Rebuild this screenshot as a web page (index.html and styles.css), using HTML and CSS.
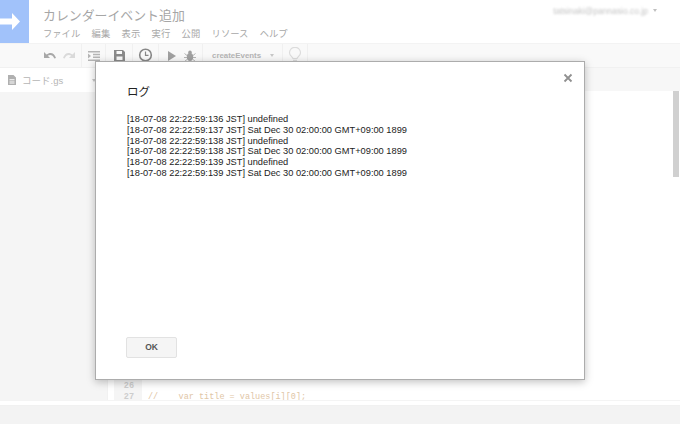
FILE: index.html
```html
<!DOCTYPE html>
<html lang="ja">
<head>
<meta charset="utf-8">
<title>カレンダーイベント追加</title>
<link rel="stylesheet" href="styles.css">
</head>
<body>
<div class="app">
  <header class="header">
    <div class="logo">
      <svg width="29" height="43" viewBox="0 0 29 43"><path d="M0 18.500H12V13L20 21.500L12 30V24.500H0Z" fill="#fff"/></svg>
    </div>
    <div class="titles">
      <div class="doc-title">カレンダーイベント追加</div>
      <nav class="menu">
        <span>ファイル</span><span>編集</span><span>表示</span><span>実行</span><span>公開</span><span>リソース</span><span>ヘルプ</span>
      </nav>
    </div>
    <div class="account">
      <span class="email">tatsinaki@pannasio.co.jp</span>
      <span class="caret"></span>
    </div>
  </header>
  <div class="toolbar">
    <div class="tool-group undo">
      <svg width="14" height="10" viewBox="0 0 14 10"><path d="M1 1V7H7L4.800 4.800C7 3.200 10 4 11.300 7.500L13 7C11.500 1.800 7.200 0.500 3.500 3.500Z" fill="#a8a8a8"/></svg>
      <svg width="14" height="10" viewBox="0 0 14 10"><path d="M13 1V7H7L9.200 4.800C7 3.200 4 4 2.700 7.500L1 7C2.500 1.800 6.800 0.500 10.500 3.500Z" fill="#dadada"/></svg>
    </div>
    <div class="tool-group indent">
      <svg width="12" height="10" viewBox="0 0 12 10"><path d="M0 0H12V1.500H0ZM5 2.800H12V4.200H5ZM5 5.600H12V7H5ZM0 8.500H12V10H0ZM0 2.500L3 5L0 7.500Z" fill="#b5b5b5"/></svg>
    </div>
    <div class="tool-group save">
      <svg width="11" height="11" viewBox="0 0 11 11"><path d="M0 0H9L11 2V11H0ZM2.500 1V4H8V1ZM2.500 6.500V10H8.500V6.500Z" fill="#8a8a8a"/></svg>
    </div>
    <div class="tool-group clock">
      <svg width="15" height="16" viewBox="0 0 15 16"><circle cx="7.500" cy="7" r="5.800" fill="none" stroke="#888" stroke-width="1.600"/><path d="M7.500 3.500V7.300H10.500" fill="none" stroke="#888" stroke-width="1.200"/><path d="M4 13.500V15.500H11V13.500" fill="none" stroke="#aaa"/></svg>
    </div>
    <div class="tool-group run">
      <svg width="8" height="10" viewBox="0 0 8 10"><path d="M0 0L8 5L0 10Z" fill="#a0a0a0"/></svg>
      <svg width="12" height="12" viewBox="0 0 12 12"><ellipse cx="6" cy="7" rx="3.200" ry="4" fill="#a0a0a0"/><circle cx="6" cy="2.400" r="1.800" fill="#a0a0a0"/><path d="M0.500 3.500L3 5.500M11.500 3.500L9 5.500M0 7.500H3M12 7.500H9M0.500 11.500L3 9.500M11.500 11.500L9 9.500" stroke="#b5b5b5" fill="none"/></svg>
    </div>
    <div class="tool-group func">
      <span class="func-name">createEvents</span>
      <span class="caret small"></span>
    </div>
    <div class="tool-group bulb">
      <svg width="14" height="18" viewBox="0 0 14 18"><path d="M5 11.500C4.500 9.800 1.500 8.800 1.500 5.800A5.500 5.500 0 0 1 12.500 5.800C12.500 8.800 9.500 9.800 9 11.500ZM5 13.300H9" fill="none" stroke="#dcdcdc" stroke-width="1.200"/></svg>
    </div>
  </div>
  <div class="workspace">
    <aside class="sidebar">
      <div class="file-tab">
        <svg width="8" height="10" viewBox="0 0 8 10"><path d="M0 0H5.500L8 2.500V10H0ZM1.500 4V4.800H6.500V4ZM1.500 5.800V6.600H6.500V5.800ZM1.500 7.600V8.400H6.500V7.600Z" fill="#b0b0b0" fill-rule="evenodd"/></svg>
        <span class="file-name">コード.gs</span>
        <span class="caret small file-caret"></span>
      </div>
    </aside>
    <main class="editor">
      <div class="editor-tabs"></div>
      <div class="editor-body">
        <div class="gutter-gap"></div>
        <div class="gutter">
          <div class="ln">25</div>
          <div class="ln">26</div>
          <div class="ln">27</div>
        </div>
        <div class="code">
          <div class="code-line">//&nbsp;&nbsp;&nbsp;&nbsp;gggg&nbsp;&nbsp;&nbsp;&nbsp;&nbsp;&nbsp;&nbsp;&nbsp;&nbsp;&nbsp;g</div>
          <div class="code-line">&nbsp;</div>
          <div class="code-line">//&nbsp;&nbsp;&nbsp;&nbsp;var title = values[i][0];</div>
        </div>
        <div class="scrollbar"><div class="thumb"></div></div>
      </div>
    </main>
  </div>
  <div class="bottom-gap"></div>
  <footer class="footer"></footer>
</div>

<section class="dialog">
  <button class="close" aria-label="閉じる">
    <svg width="10" height="10" viewBox="0 0 10 10"><path d="M1.500 1.500L8.500 8.500M8.500 1.500L1.500 8.500" stroke="#909090" stroke-width="1.800"/></svg>
  </button>
  <h1 class="dialog-title">ログ</h1>
  <div class="log">
    <div>[18-07-08 22:22:59:136 JST] undefined</div>
    <div>[18-07-08 22:22:59:137 JST] Sat Dec 30 02:00:00 GMT+09:00 1899</div>
    <div>[18-07-08 22:22:59:138 JST] undefined</div>
    <div>[18-07-08 22:22:59:138 JST] Sat Dec 30 02:00:00 GMT+09:00 1899</div>
    <div>[18-07-08 22:22:59:139 JST] undefined</div>
    <div>[18-07-08 22:22:59:139 JST] Sat Dec 30 02:00:00 GMT+09:00 1899</div>
  </div>
  <button class="ok">OK</button>
</section>
</body>
</html>
```
FILE: styles.css
```css
* { box-sizing: border-box; }
html, body { margin: 0; height: 100%; overflow: hidden; }
body {
  position: relative;
  width: 680px;
  height: 424px;
  background: #fff;
  font-family: "Liberation Sans", "Noto Sans CJK JP", sans-serif;
}
.app { display: flex; flex-direction: column; height: 424px; }

.header { display: flex; height: 43px; flex: none; background: #fff; }
.logo { width: 29px; height: 43px; background: #a1c2fa; flex: none; }
.logo svg { display: block; }
.titles { padding: 6px 0 0 14px; flex: 1; }
.doc-title { font-size: 12.900px; line-height: 20px; color: #a6a6a6; }
.menu { display: flex; gap: 11.400px; margin-top: 1px; font-size: 9.300px; line-height: 14px; color: #a8a8a8; }
.account { display: flex; align-items: flex-start; gap: 5px; padding: 6px 23px 0 0; }
.email { font-size: 8.500px; line-height: 10px; color: #c4c4c4; filter: blur(1.200px); }
.caret { display: block; width: 0; height: 0; margin-top: 3px; border: 2.500px solid transparent; border-top: 3px solid #c0c0c0; border-bottom: 0; }
.caret.small { margin-top: 0; border-top-color: #c8c8c8; }

.toolbar { display: flex; align-items: center; height: 25px; flex: none; padding-left: 37px; background: #f9f9f9; border-top: 1px solid #f3f3f3; border-bottom: 1px solid #f1f1f1; }
.tool-group { display: flex; align-items: center; height: 100%; border-right: 1px solid #f0f0f0; }
.undo { width: 45px; gap: 5px; padding-left: 6px; }
.indent { width: 24px; padding-left: 6px; }
.save { width: 27px; padding-left: 8px; }
.clock { width: 26px; padding-left: 5px; }
.run { width: 44px; gap: 8px; padding-left: 9px; }
.func { width: 80px; padding-left: 9px; gap: 9px; }
.func-name { font-size: 7.900px; font-weight: bold; color: #b5b5b5; }
.bulb { width: 25px; padding-left: 5px; }

.workspace { display: flex; flex: 1; min-height: 0; }
.sidebar { width: 108px; flex: none; background: #f5f5f5; border-right: 1px solid #f1f1f1; }
.file-tab { display: flex; align-items: center; height: 24px; padding-left: 8px; background: #fff; }
.file-name { margin-left: 6px; font-size: 9.500px; color: #b5b5b5; }
.file-caret { margin-left: 29px; }

.editor { flex: 1; display: flex; flex-direction: column; min-width: 0; }
.editor-tabs { height: 23px; flex: none; background: #f7f7f7; }
.editor-body { flex: 1; display: flex; background: #fff; overflow: hidden; }
.gutter-gap { width: 6px; background: #fff; flex: none; }
.gutter { width: 28px; margin-bottom: -3px; flex: none; padding-right: 8px; display: flex; flex-direction: column; justify-content: flex-end; background: #f5f5f5; }
.ln { height: 11px; font: bold 8.500px/11px "Liberation Mono", monospace; color: #cdcdcd; text-align: right; }
.code { flex: 1; margin-bottom: -3px; padding-left: 6px; display: flex; flex-direction: column; justify-content: flex-end; }
.code-line { height: 11px; font: 8.500px/11px "Liberation Mono", monospace; color: #dfc6a6; white-space: nowrap; }
.scrollbar { width: 6px; flex: none; margin-right: 1px; background: #fff; }
.thumb { height: 86px; background: #d0d0d0; }

.bottom-gap { height: 6px; flex: none; background: #fff; border-top: 1px solid #f4f4f4; border-bottom: 1px solid #f1f1f1; }
.footer { height: 18px; flex: none; background: #f3f3f3; }

.dialog {
  position: absolute;
  left: 95px;
  top: 61px;
  width: 490px;
  height: 319px;
  padding: 23px 30px 0 31px;
  background: #fff;
  border: 1px solid #acacac;
  box-shadow: 0 2px 8px rgba(0, 0, 0, .25);
}
.close { position: absolute; top: 11px; right: 11px; width: 10px; height: 10px; padding: 0; border: 0; background: none; }
.close svg { display: block; }
.dialog-title { margin: 0; font-size: 11.500px; line-height: 14px; font-weight: normal; color: #222; }
.log { margin-top: 15px; font-size: 9.270px; line-height: 10.800px; color: #222; white-space: nowrap; }
.ok {
  position: absolute;
  left: 30px;
  bottom: 21px;
  width: 51px;
  height: 21px;
  padding: 0;
  font: bold 8.500px/19px "Liberation Sans", sans-serif;
  color: #555;
  background: #f5f5f5;
  border: 1px solid #e2e2e2;
  border-radius: 2px;
}
```
